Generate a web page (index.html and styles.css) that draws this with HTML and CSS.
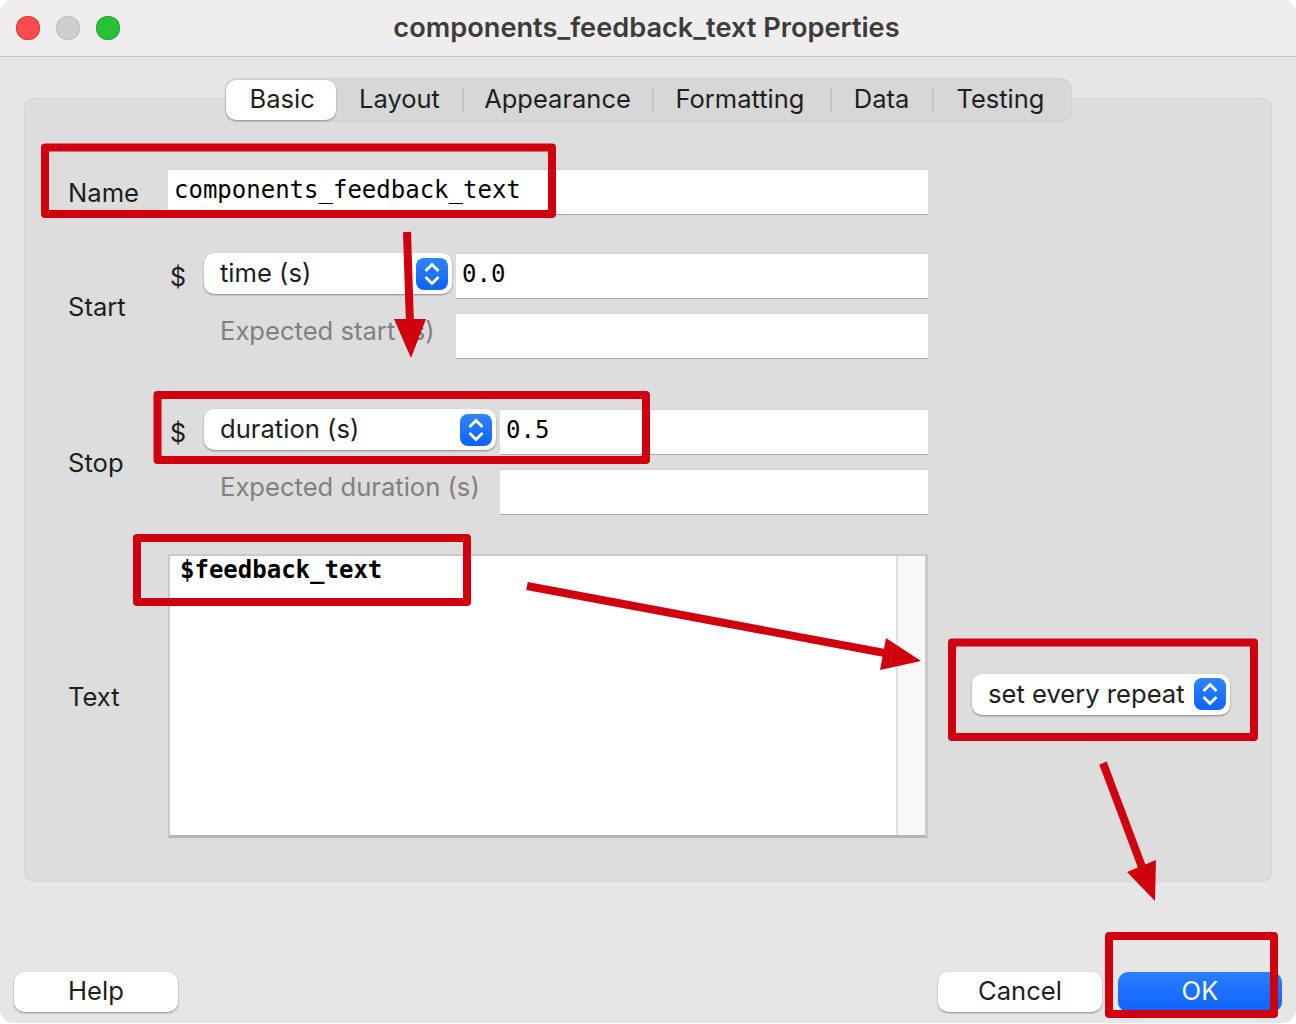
FILE: index.html
```html
<!DOCTYPE html>
<html>
<head>
	<title>components_feedback_text Properties</title>
	<link rel="stylesheet" href="styles.css">
</head>
<body>
	<div class="window">
		<!-- Title bar -->
		<div class="titlebar">
			<div class="lights">
				<span class="light red"></span>
				<span class="light grey"></span>
				<span class="light green"></span>
			</div>
			<div class="title">components_feedback_text Properties</div>
		</div>

		<div class="content">
			<div class="tabs">
				<div class="tab active">Basic</div>
				<div class="tab">Layout</div>
				<div class="tab">Appearance</div>
				<div class="tab">Formatting</div>
				<div class="tab">Data</div>
				<div class="tab last">Testing</div>
			</div>

			<div class="panel">
				<div class="row name-row">
					<div class="label name-label">Name</div>
					<div class="field grow">components_feedback_text</div>
				</div>

				<div class="row start-row">
					<div class="label">Start</div>
					<div class="grid start-grid">
						<div class="dollar">$</div>
						<div class="select">
							<span>time (s)</span>
							<svg class="stepper" viewBox="0 0 32 32"><use href="#chevrons"/></svg>
						</div>
						<div class="field">0.0</div>
						<div></div>
						<div class="hint">Expected start (s)</div>
						<div class="field"></div>
					</div>
				</div>

				<div class="row stop-row">
					<div class="label">Stop</div>
					<div class="grid stop-grid">
						<div class="dollar">$</div>
						<div class="select">
							<span>duration (s)</span>
							<svg class="stepper" viewBox="0 0 32 32"><use href="#chevrons"/></svg>
						</div>
						<div class="field">0.5</div>
						<div></div>
						<div class="hint">Expected duration (s)</div>
						<div class="field"></div>
					</div>
				</div>

				<div class="row text-row">
					<div class="label">Text</div>
					<div class="editor">
						<div class="editor-text">$feedback_text</div>
						<div class="gutter"></div>
					</div>
					<div class="select repeat">
						<span>set every repeat</span>
						<svg class="stepper" viewBox="0 0 32 32"><use href="#chevrons"/></svg>
					</div>
				</div>
			</div>

			<div class="buttons">
				<div class="btn">Help</div>
				<div class="btn-right">
					<div class="btn">Cancel</div>
					<div class="btn primary">OK</div>
				</div>
			</div>
		</div>

		<!-- Red annotations on top of the screenshot -->
		<svg class="notes" viewBox="0 0 1296 1024">
			<defs>
				<g id="chevrons">
					<rect width="32" height="32" rx="8" fill="url(#blue)"/>
					<path d="M9.500 13 L16 6.500 L22.500 13 M9.500 19 L16 25.500 L22.500 19" fill="none" stroke="#fff" stroke-width="2.800"/>
				</g>
				<linearGradient id="blue" x1="0" y1="0" x2="0" y2="1">
					<stop offset="0" stop-color="#2f84ff"/>
					<stop offset="1" stop-color="#0f62fe"/>
				</linearGradient>
			</defs>
			<g fill="none" stroke="#d0000f" stroke-width="8" stroke-linejoin="round">
				<rect x="45" y="147.500" width="507" height="66.500"/>
				<rect x="157.500" y="395" width="488.500" height="65"/>
				<rect x="137" y="538" width="330" height="64"/>
				<rect x="952" y="642.500" width="302" height="94.500"/>
				<rect x="1109" y="936" width="165" height="78"/>
				<path d="M407 232 L410 325"/>
				<path d="M527 586 L890 654"/>
				<path d="M1103 763 L1142 867"/>
			</g>
			<g fill="#d0000f">
				<path d="M394 319 L426 319 L411 358 Z"/>
				<path d="M886 638 L921 661 L880 670 Z"/>
				<path d="M1127 872 L1156 860 L1155 901 Z"/>
			</g>
		</svg>
	</div>
</body>
</html>
```

FILE: styles.css
```css
/* Page */
body {
	margin: 0;
	background-color: #fff;
	font-family: Inter, "Noto Sans", sans-serif;
	font-size: 25.600px;
	color: #1e1e1e;
}

.window {
	position: relative;
	width: 1296px;
	height: 1023px;
	background-color: #e6e6e6;
	border-radius: 14px;
	overflow: hidden;
}

/* Title bar */
.titlebar {
	display: flex;
	align-items: center;
	justify-content: center;
	position: relative;
	height: 56px;
	background-color: #efedee;
	border-bottom: 1px solid #c8c8c8;
}

.title {
	margin-top: -2px;
	padding-right: 3px;
	font-size: 27.200px;
	font-weight: 600;
	color: #3c3c3c;
}

.lights {
	position: absolute;
	top: 16px;
	left: 16px;
	display: flex;
	gap: 16px;
}

.light {
	width: 24px;
	height: 24px;
	border-radius: 50%;
}

.red { background-color: #ff4d4f; box-shadow: inset 0 0 0 1px #e0383c; }
.grey { background-color: #cfcdce; box-shadow: inset 0 0 0 1px #bdbbbc; }
.green { background-color: #27c235; box-shadow: inset 0 0 0 1px #1fae2c; }

.content {
	padding: 21px 14px 0;
}

/* Tabs */
.tabs {
	position: relative;
	z-index: 1;
	display: flex;
	align-items: center;
	width: 847px;
	height: 44px;
	box-sizing: border-box;
	margin: 0 auto -24px;
	font-size: 25.500px;
	background-color: #d7d7d7;
	border: 1px solid #d0d0d0;
	border-radius: 11px;
}

.tab {
	box-sizing: border-box;
	height: 24px;
	line-height: 22px;
	text-align: center;
	border-right: 2px solid #c4c4c4;
}

.tab:nth-child(2) { width: 126px; }
.tab:nth-child(3) { width: 190px; }
.tab:nth-child(4) { width: 178px; padding-right: 3px; }
.tab:nth-child(5) { width: 102px; }
.tab:nth-child(6) { width: 137px; padding-right: 3px; }

.tab.active {
	width: 110px;
	height: 40px;
	margin-right: 2px;
	padding-left: 24px;
	line-height: 38px;
	text-align: left;
	background-color: #fff;
	border: 0;
	border-radius: 10px;
	box-shadow: 0 1px 2px rgba(0,0,0,0.35);
}

.tab.last {
	border-right: 0;
}

/* Main panel */
.panel {
	margin: 0 10px;
	height: 784px;
	box-sizing: border-box;
	padding: 70px 0 0 43px;
	background-color: #ddd;
	border: 1px solid #d4d4d4;
	border-radius: 10px;
}

.row {
	display: flex;
	align-items: center;
}

.name-row {
	width: 860px;
}

.start-row {
	width: 860px;
	margin-top: 38px;
}

.stop-row {
	width: 860px;
	margin-top: 50px;
}

.text-row {
	margin-top: 39px;
}

.label {
	flex: none;
	width: 100px;
}

.name-label {
	padding-top: 1px;
}

.grow {
	flex: 1;
}

.grid {
	flex: 1;
	display: grid;
	row-gap: 14px;
	align-items: center;
}

.start-grid {
	grid-template-columns: 36px 252px 1fr;
}

.stop-grid {
	grid-template-columns: 36px 296px 1fr;
}

.dollar {
	padding: 2px 0 0 2px;
	font-size: 25px;
}

.hint {
	padding: 0 0 12px 16px;
	color: #808080;
}

/* Inputs */
.field {
	height: 46px;
	box-sizing: border-box;
	padding-left: 6px;
	font-family: "DejaVu Sans Mono", monospace;
	font-size: 24px;
	line-height: 40px;
	color: #000;
	background-color: #fff;
	border-top: 1px solid #cfcfcf;
	border-bottom: 1px solid #a8a8a8;
}

.select {
	display: flex;
	align-items: center;
	justify-content: space-between;
	height: 41px;
	margin-top: -5px;
	margin-right: 4px;
	padding: 0 4px 0 16px;
	background-color: #fff;
	border-radius: 10px;
	box-shadow: 0 1px 2px rgba(0,0,0,0.4);
}

.select span {
	margin-top: -2px;
}

.stepper {
	width: 32px;
	height: 32px;
}

.repeat {
	flex: none;
	width: 258px;
	box-sizing: border-box;
	margin: -4px 0 0 44px;
}

.editor {
	flex: none;
	display: flex;
	width: 760px;
	height: 284px;
	box-sizing: border-box;
	background-color: #fff;
	border: 2px solid #c9c9c9;
	border-right-width: 3px;
	border-bottom: 3px solid #b4b4b4;
}

.editor-text {
	flex: 1;
	padding: 0 0 0 10px;
	font-family: "DejaVu Sans Mono", monospace;
	font-size: 24px;
	font-weight: bold;
	line-height: 28px;
	color: #000;
}

.gutter {
	width: 27px;
	background-color: #f8f8f8;
	border-left: 2px solid #e0e0e0;
}

/* Bottom buttons */
.buttons {
	display: flex;
	justify-content: space-between;
	margin-top: 90px;
}

.btn-right {
	display: flex;
	gap: 16px;
}

.btn {
	width: 164px;
	height: 40px;
	line-height: 38px;
	text-align: center;
	background-color: #fff;
	border-radius: 10px;
	box-shadow: 0 1px 2px rgba(0,0,0,0.4);
}

.btn.primary {
	color: #fff;
	background: linear-gradient(#2a7eff, #0f62fe);
	box-shadow: none;
}

/* Annotation layer */
.notes {
	position: absolute;
	top: 0;
	left: 0;
	width: 1296px;
	height: 1024px;
	pointer-events: none;
}
```
